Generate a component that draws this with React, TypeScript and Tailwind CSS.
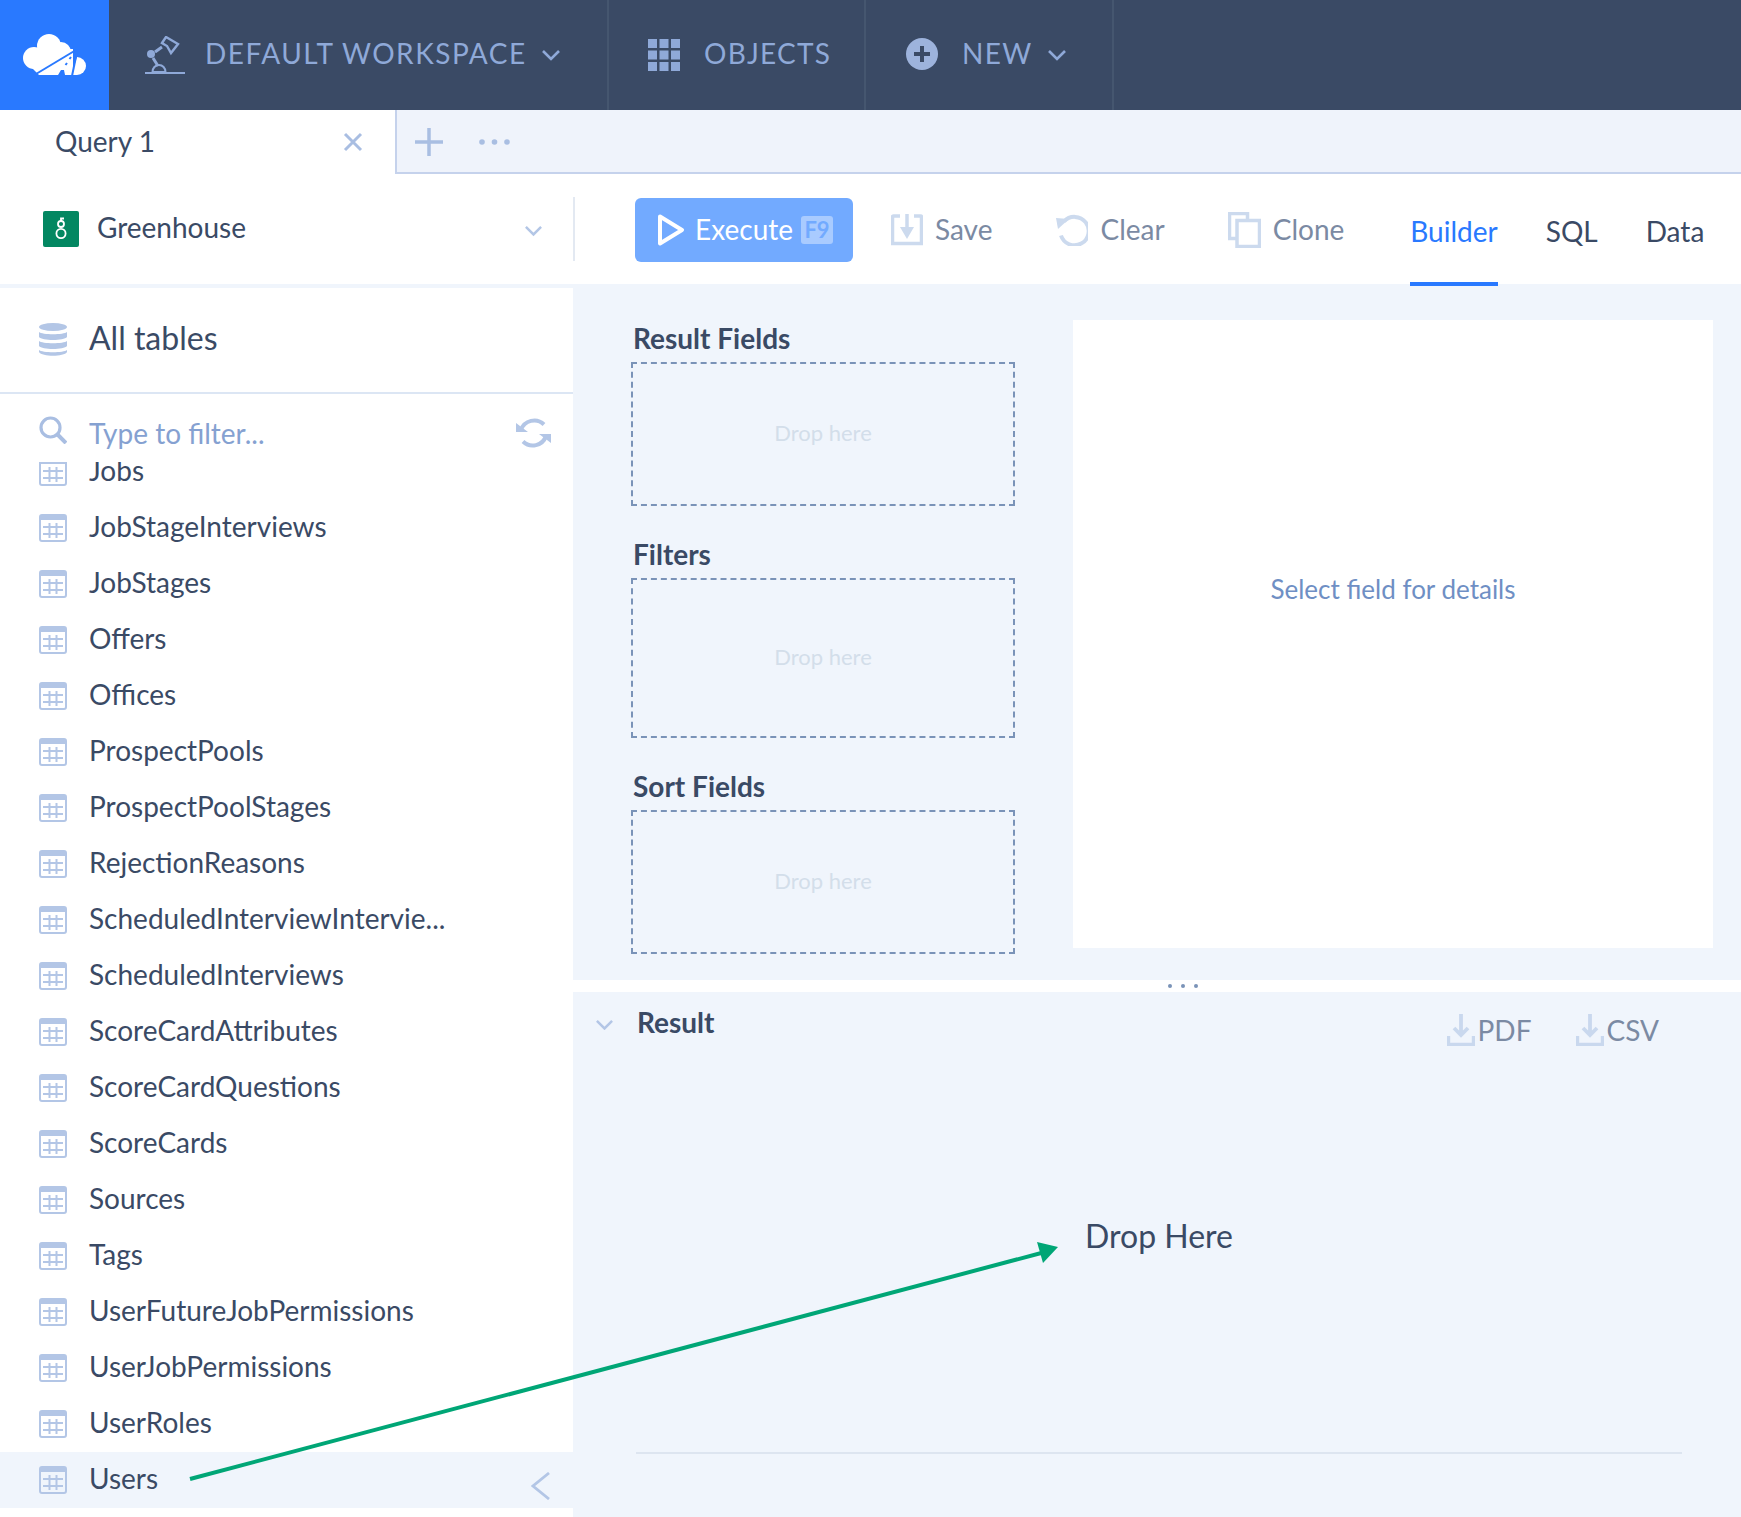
import React from "react";

const tables = [
  "Jobs",
  "JobStageInterviews",
  "JobStages",
  "Offers",
  "Offices",
  "ProspectPools",
  "ProspectPoolStages",
  "RejectionReasons",
  "ScheduledInterviewIntervie...",
  "ScheduledInterviews",
  "ScoreCardAttributes",
  "ScoreCardQuestions",
  "ScoreCards",
  "Sources",
  "Tags",
  "UserFutureJobPermissions",
  "UserJobPermissions",
  "UserRoles",
  "Users",
];

function Chevron({ className, color = "#8fa9d8" }: { className?: string; color?: string }) {
  return (
    <svg viewBox="0 0 20 12" className={className} fill="none">
      <path d="M2 2l8 8 8-8" stroke={color} strokeWidth="2.6" />
    </svg>
  );
}

function Logo() {
  return (
    <svg viewBox="22 35 63 41" width="63" height="41">
      <g fill="#fff">
        <circle cx="48" cy="47" r="12" />
        <circle cx="33" cy="59" r="11" />
        <circle cx="60" cy="53" r="10" />
        <path d="M30 68L38 76H72V50H50z" />
        <path d="M76 58a9 9 0 0 1 0 18h-6z" />
      </g>
      <path d="M35 75L75 51" stroke="#2979ff" strokeWidth="2" />
      <path d="M76 53L71 77" stroke="#2979ff" strokeWidth="2" />
      <path d="M70 58l-1.500 2M66 64l-1.500 2" stroke="#2979ff" strokeWidth="2" />
      <path d="M57 76l3-5h3l1 5z" fill="#2979ff" />
    </svg>
  );
}

function LampIcon() {
  return (
    <svg viewBox="145 34 40 38" width="40" height="38" fill="none">
      <path d="M145 71h40" stroke="#8fa9d8" strokeWidth="2" />
      <path d="M152.500 70a6.500 7 0 0 1 13 0z" stroke="#8fa9d8" strokeWidth="2" />
      <circle cx="151" cy="52" r="4" fill="#8fa9d8" />
      <path d="M153 56l5 8M155 50l7-5" stroke="#8fa9d8" strokeWidth="3" />
      <path d="M162 41l4-6 12 7-7 9-4-7z" stroke="#8fa9d8" strokeWidth="2.400" />
    </svg>
  );
}

function GridIcon() {
  const cells = [0, 11.500, 23];
  return (
    <svg viewBox="0 0 32 32" width="32" height="32">
      {cells.map((y) =>
        cells.map((x) => <rect key={`${x}-${y}`} x={x} y={y} width="9" height="9" fill="#8fa9d8" />)
      )}
    </svg>
  );
}

function TableIcon() {
  return (
    <svg viewBox="0 0 28 28" width="28" height="28" fill="none" className="shrink-0">
      <rect x="1" y="1" width="26" height="26" rx="2" stroke="#b3c6e6" strokeWidth="2" />
      <path d="M2 1h24a1 1 0 0 1 1 1v4H1V2a1 1 0 0 1 1-1z" fill="#b3c6e6" />
      <path d="M4 13h20M4 20h20M10.500 9v15M17.500 9v15" stroke="#b3c6e6" strokeWidth="2" />
    </svg>
  );
}

function DownloadIcon() {
  return (
    <svg viewBox="0 0 28 32" width="28" height="32" fill="none" className="shrink-0">
      <path d="M14 0v21M7 14l7 7 7-7" stroke="#c9d8ee" strokeWidth="3.800" />
      <path d="M1.500 22v8.500h25V22" stroke="#c9d8ee" strokeWidth="3.400" />
    </svg>
  );
}

function DropZone({ className }: { className: string }) {
  return (
    <div className={`flex items-center justify-center border-2 border-dashed border-[#7a93b8] pb-[4px] text-[22px] text-[#d3deea] ${className}`}>
      Drop here
    </div>
  );
}

export default function App() {
  return (
    <div className="relative h-[1517px] w-[1741px] overflow-hidden bg-white [font-family:Lato,sans-serif] text-[#3a4a65]">
      {/* header */}
      <div className="flex h-[110px] bg-[#3a4a65] text-[28px] tracking-[1.300px] text-[#8fa9d8]">
        <div className="flex w-[109px] items-center justify-center bg-[#2979ff] pb-[1px]">
          <Logo />
        </div>
        <div className="flex w-[500px] items-center border-r-2 border-[#45566f] pl-[36px]">
          <LampIcon />
          <span className="ml-[20px] mb-[4px] tracking-[1.500px]">DEFAULT WORKSPACE</span>
          <Chevron className="ml-[14px] w-[20px]" />
        </div>
        <div className="flex w-[257px] items-center border-r-2 border-[#45566f] pl-[39px]">
          <GridIcon />
          <span className="ml-[24px] mb-[4px]">OBJECTS</span>
        </div>
        <div className="flex w-[248px] items-center border-r-2 border-[#45566f] pl-[40px]">
          <svg viewBox="0 0 32 32" width="32" height="32" className="mb-[2px]">
            <circle cx="16" cy="16" r="16" fill="#9db3dc" />
            <path d="M16 8v16M8 16h16" stroke="#3a4a65" strokeWidth="4" />
          </svg>
          <span className="ml-[24px] mb-[4px]">NEW</span>
          <Chevron className="ml-[15px] w-[20px]" />
        </div>
      </div>

      {/* query tabs */}
      <div className="flex h-[64px] bg-[#eff3fb]">
        <div className="flex w-[395px] items-center justify-between bg-white pl-[55px] pr-[32px] text-[28px]">
          <span className="mb-[2px]">Query 1</span>
          <svg viewBox="0 0 20 20" width="20" height="20">
            <path d="M2 2l16 16M18 2L2 18" stroke="#a9bee2" strokeWidth="3" />
          </svg>
        </div>
        <div className="flex flex-1 items-center border-b-2 border-l-2 border-[#c5d2ec] pl-[18px] pt-[2px]">
          <svg viewBox="0 0 28 28" width="28" height="28">
            <path d="M14 0v28M0 14h28" stroke="#a9bee2" strokeWidth="3.500" />
          </svg>
          <svg viewBox="0 0 31 6" width="31" height="6" className="ml-[36px]">
            <circle cx="3" cy="3" r="2.800" fill="#a9bee2" />
            <circle cx="15.500" cy="3" r="2.800" fill="#a9bee2" />
            <circle cx="28" cy="3" r="2.800" fill="#a9bee2" />
          </svg>
        </div>
      </div>

      {/* toolbar */}
      <div className="flex h-[110px] text-[28px]">
        <div className="flex w-[575px] shrink-0 items-center pl-[43px]">
          <div className="flex h-[36px] w-[36px] items-center justify-center rounded-[2px] bg-[#038761]">
            <svg viewBox="0 0 12 24" width="12" height="24" fill="none" stroke="#fff" strokeWidth="1.800">
              <circle cx="6" cy="7" r="3" />
              <circle cx="6" cy="16.500" r="4.600" />
              <path d="M6 4V1.500h3" />
            </svg>
          </div>
          <span className="ml-[18px] mb-[5px]">Greenhouse</span>
          <Chevron className="ml-[278px] mt-[4px] w-[19px]" color="#b3c6e6" />
          <div className="ml-[30px] h-[64px] w-[2px] shrink-0 bg-[#e3e9f2]" />
        </div>
        <div className="ml-[60px] mt-[24px] flex h-[64px] w-[218px] items-center rounded-[6px] bg-[#72aaff] pl-[23px] text-white">
          <svg viewBox="0 0 27 32" width="27" height="32" fill="none">
            <path d="M2 2.500l22 13.500L2 29.500z" stroke="#fff" strokeWidth="4" strokeLinejoin="round" />
          </svg>
          <span className="ml-[10px] mb-[2px]">Execute</span>
          <span className="ml-[8px] flex h-[28px] w-[32px] items-center justify-center rounded-[3px] bg-[#a9cbff] text-[22px] font-bold leading-none text-[#72aaff]">F9</span>
        </div>
        <div className="mt-[24px] flex h-[64px] items-center text-[#7b8aa3]">
          <svg viewBox="0 0 32 32" width="32" height="32" fill="none" className="ml-[38px]">
            <path d="M9 2H2.500a1 1 0 0 0-1 1v26.500h29V3a1 1 0 0 0-1-1H23" stroke="#ccdaee" strokeWidth="3.500" />
            <path d="M16 0v13" stroke="#ccdaee" strokeWidth="3.500" />
            <path d="M9 13h14l-7 12z" fill="#ccdaee" />
          </svg>
          <span className="ml-[12px] mb-[2px]">Save</span>
          <svg viewBox="0 0 33 32" width="33" height="32" fill="none" className="ml-[63px]">
            <path d="M9 7.500a14.200 14.200 0 1 1-3 14" stroke="#ccdaee" strokeWidth="4" />
            <path d="M1 4l13 1-11 10z" fill="#ccdaee" />
          </svg>
          <span className="ml-[12px] mb-[2px]">Clear</span>
          <svg viewBox="0 0 33 36" width="33" height="36" fill="none" className="ml-[63px]">
            <path d="M8 26.500H1.500v-25h18V8" stroke="#ccdaee" strokeWidth="3.500" />
            <rect x="9" y="8.500" width="22.500" height="26" stroke="#ccdaee" strokeWidth="3.500" />
          </svg>
          <span className="ml-[12px] mb-[2px]">Clone</span>
        </div>
        <div className="relative mt-[29px] ml-[66px] h-[81px] text-[#2979ff]">
          <span className="block leading-[56px]">Builder</span>
          <div className="absolute bottom-[-2px] left-0 h-[4px] w-full bg-[#2979ff]" />
        </div>
        <span className="mt-[29px] ml-[48px] leading-[56px]">SQL</span>
        <span className="mt-[29px] ml-[48px] leading-[56px]">Data</span>
      </div>

      {/* body */}
      <div className="flex h-[1233px] bg-[#f0f5fc]">
        <aside className="relative mt-[4px] h-[1229px] w-[573px] shrink-0 bg-white text-[28px]">
          <div className="flex h-[106px] items-center border-b-2 border-[#dce6f4] pl-[39px] pb-[4px]">
            <svg viewBox="0 0 28 33" width="28" height="33" fill="#b3c6e6" className="mt-[2px]">
              <ellipse cx="14" cy="4" rx="14" ry="4" />
              <path d="M0 9c3 3 25 3 28 0v5c-3 4-25 4-28 0zM0 18c3 3 25 3 28 0v5c-3 4-25 4-28 0zM0 27c3 3 25 3 28 0v2c-3 5-25 5-28 0z" />
            </svg>
            <span className="ml-[22px] text-[32px]">All tables</span>
          </div>
          <div className="flex h-[68px] items-center pl-[39px] pt-[10px]">
            <svg viewBox="0 0 28 28" width="28" height="28" fill="none" className="mb-[6px]">
              <circle cx="11.500" cy="11.500" r="9.500" stroke="#a9bee2" strokeWidth="3.200" />
              <path d="M18 18l9 9" stroke="#a9bee2" strokeWidth="4" />
            </svg>
            <span className="ml-[22px] text-[#85a1d1]">Type to filter...</span>
            <svg viewBox="0 0 35 32" width="35" height="32" fill="none" className="ml-[251px]">
              <path d="M5 13A14 14 0 0 1 28 7.500M30 19A14 14 0 0 1 7 24.500" stroke="#b3c6e6" strokeWidth="4" />
              <path d="M0 6l12 9H0zM35 26l-12-9h12z" fill="#b3c6e6" />
            </svg>
          </div>
          <div className="h-[1046px] overflow-hidden">
            <div className="-mt-[18px]">
              {tables.map((t) => (
                <div key={t} className={`flex h-[56px] items-center pl-[39px] ${t === "Users" ? "bg-[#f0f5fc]" : ""}`}>
                  <TableIcon />
                  <span className="ml-[22px] mb-[4px]">{t}</span>
                </div>
              ))}
            </div>
          </div>
          <svg viewBox="0 0 19 28" width="19" height="28" fill="none" className="absolute left-[531px] top-[1184px]">
            <path d="M18 1L2 14l16 13" stroke="#b3c6e6" strokeWidth="2.800" />
          </svg>
        </aside>

        <main className="flex flex-1 flex-col">
          <div className="flex h-[696px] pt-[36px]">
            <div className="ml-[58px] w-[384px] shrink-0">
              <h3 className="pl-[2px] text-[28px] font-bold leading-[36px]">Result Fields</h3>
              <DropZone className="mt-[6px] h-[144px]" />
              <h3 className="mt-[30px] pl-[2px] text-[28px] font-bold leading-[36px]">Filters</h3>
              <DropZone className="mt-[6px] h-[160px]" />
              <h3 className="mt-[30px] pl-[2px] text-[28px] font-bold leading-[36px]">Sort Fields</h3>
              <DropZone className="mt-[6px] h-[144px]" />
            </div>
            <div className="ml-[58px] flex h-[628px] w-[640px] items-center justify-center bg-white pb-[89px] text-[26px] text-[#6f8fc4]">
              Select field for details
            </div>
          </div>

          <div className="flex h-[12px] items-center justify-center gap-[9px] bg-white pl-[52px]">
            <span className="h-[4px] w-[4px] rounded-full bg-[#7a93b8]" />
            <span className="h-[4px] w-[4px] rounded-full bg-[#7a93b8]" />
            <span className="h-[4px] w-[4px] rounded-full bg-[#7a93b8]" />
          </div>

          <section className="flex-1 px-[63px]">
            <div className="-ml-[41px] mt-[8px] flex h-[44px] items-center">
              <Chevron className="mt-[5px] w-[19px]" color="#b3c6e6" />
              <span className="ml-[23px] text-[28px] font-bold">Result</span>
              <div className="ml-auto mt-[16px] mr-[19px] flex items-center text-[28px] text-[#7b8aa3]">
                <DownloadIcon />
                <span className="ml-[3px]">PDF</span>
                <div className="ml-[44px]" />
                <DownloadIcon />
                <span className="ml-[3px]">CSV</span>
              </div>
            </div>
            <div className="ml-[449px] mt-[172px] text-[32px] leading-[40px]">Drop Here</div>
            <div className="mt-[196px] mr-[-4px] h-[2px] bg-[#dde5f0]" />
          </section>
        </main>
      </div>

      {/* annotation arrow */}
      <svg viewBox="0 0 1741 1517" width="1741" height="1517" className="pointer-events-none absolute left-0 top-0">
        <path d="M190 1479L1045 1252" stroke="#00a676" strokeWidth="4" />
        <path d="M1058 1247L1037 1242L1043 1263z" fill="#00a676" />
      </svg>
    </div>
  );
}
